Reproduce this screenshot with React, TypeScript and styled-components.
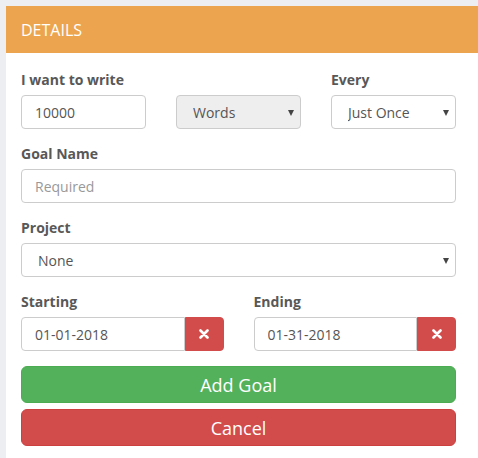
import React from "react";
import styled, { createGlobalStyle } from "styled-components";

const GlobalStyle = createGlobalStyle`
  html, body { margin: 0; padding: 0; }
  body {
    background: #eceef1;
    font-family: "Open Sans", "Liberation Sans", sans-serif;
    font-size: 14px;
    color: #555;
  }
  * { box-sizing: border-box; }
`;

const Page = styled.div`
  padding: 6px 0 0 6px;
  width: 478px;
  height: 458px;
  overflow: hidden;
`;

const Panel = styled.div`
  background: #fff;
  width: 472px;
  height: 452px;
`;

const PanelHeading = styled.div`
  height: 47px;
  padding: 0 15px;
  display: flex;
  align-items: center;
  background: #eca54e;
  color: #fff;
  font-size: 16px;
  letter-spacing: 0;
`;

const PanelBody = styled.div`
  padding: 17px 22px 12px 15px;
`;

const Row = styled.div<{ $cols: number }>`
  display: grid;
  grid-template-columns: repeat(${(p) => p.$cols}, 1fr);
  column-gap: 30px;
`;

const FormGroup = styled.div`
  margin-bottom: 15px;
  min-width: 0;
`;

const Label = styled.label`
  display: block;
  font-weight: 700;
  line-height: 20px;
  margin-bottom: 5px;
  color: #585858;
`;

const fieldBase = `
  display: block;
  width: 100%;
  height: 34px;
  border: 1px solid #ccc;
  border-radius: 4px;
  font-family: "Open Sans", "Liberation Sans", sans-serif;
  font-size: 14px;
  color: #555;
  line-height: 20px;
  outline: none;
  background: #fff;
`;

const TextInput = styled.input<{ $grouped?: boolean }>`
  ${fieldBase}
  padding: 6px 12px 6px 13px;
  ${(p) => (p.$grouped ? "border-radius: 4px 0 0 4px; flex: 1; min-width: 0;" : "")}
  &::placeholder { color: #999; }
`;

const SelectWrap = styled.div`
  position: relative;
  &::after {
    content: "";
    position: absolute;
    right: 7px;
    top: 15px;
    border-left: 3.5px solid transparent;
    border-right: 3.5px solid transparent;
    border-top: 6px solid #444;
    pointer-events: none;
  }
`;

const Select = styled.select<{ $muted?: boolean }>`
  ${fieldBase}
  appearance: none;
  -webkit-appearance: none;
  padding: 7px 20px 5px 16px;
  background: ${(p) => (p.$muted ? "#eee" : "#fff")};
`;

const InputGroup = styled.div`
  display: flex;
`;

const ClearButton = styled.button`
  width: 39px;
  height: 34px;
  flex: none;
  border: 1px solid #d24c4b;
  border-radius: 0 4px 4px 0;
  background: #d24c4b;
  display: flex;
  align-items: center;
  justify-content: center;
  padding: 0;
`;

const BlockButton = styled.button<{ $variant: "success" | "danger" }>`
  display: block;
  width: 100%;
  height: 37px;
  margin-top: ${(p) => (p.$variant === "danger" ? "6px" : "0")};
  border-radius: 6px;
  border: 1px solid ${(p) => (p.$variant === "success" ? "#4cac52" : "#cc4040")};
  background: ${(p) => (p.$variant === "success" ? "#53b15b" : "#d24c4b")};
  color: #fff;
  font-family: "Open Sans", "Liberation Sans", sans-serif;
  font-size: 18px;
  line-height: 24px;
  padding: 0;
`;

const TimesIcon = () => (
  <svg width="10" height="10" viewBox="0 0 10 10">
    <path d="M1.5 1.5 L8.5 8.5 M8.5 1.5 L1.5 8.5" stroke="#fff" strokeWidth="2.6" strokeLinecap="round" />
  </svg>
);

const DateField = ({ label, value }: { label: string; value: string }) => (
  <FormGroup>
    <Label>{label}</Label>
    <InputGroup>
      <TextInput $grouped defaultValue={value} />
      <ClearButton aria-label="clear">
        <TimesIcon />
      </ClearButton>
    </InputGroup>
  </FormGroup>
);

export default function App() {
  return (
    <>
      <GlobalStyle />
      <Page>
        <Panel>
          <PanelHeading>DETAILS</PanelHeading>
          <PanelBody>
            <Row $cols={3}>
              <FormGroup>
                <Label>I want to write</Label>
                <TextInput defaultValue="10000" />
              </FormGroup>
              <FormGroup>
                <Label>&nbsp;</Label>
                <SelectWrap>
                  <Select $muted defaultValue="Words">
                    <option>Words</option>
                  </Select>
                </SelectWrap>
              </FormGroup>
              <FormGroup>
                <Label>Every</Label>
                <SelectWrap>
                  <Select defaultValue="Just Once">
                    <option>Just Once</option>
                  </Select>
                </SelectWrap>
              </FormGroup>
            </Row>
            <FormGroup>
              <Label>Goal Name</Label>
              <TextInput placeholder="Required" />
            </FormGroup>
            <FormGroup>
              <Label>Project</Label>
              <SelectWrap>
                <Select defaultValue="None">
                  <option>None</option>
                </Select>
              </SelectWrap>
            </FormGroup>
            <Row $cols={2}>
              <DateField label="Starting" value="01-01-2018" />
              <DateField label="Ending" value="01-31-2018" />
            </Row>
            <BlockButton $variant="success">Add Goal</BlockButton>
            <BlockButton $variant="danger">Cancel</BlockButton>
          </PanelBody>
        </Panel>
      </Page>
    </>
  );
}
